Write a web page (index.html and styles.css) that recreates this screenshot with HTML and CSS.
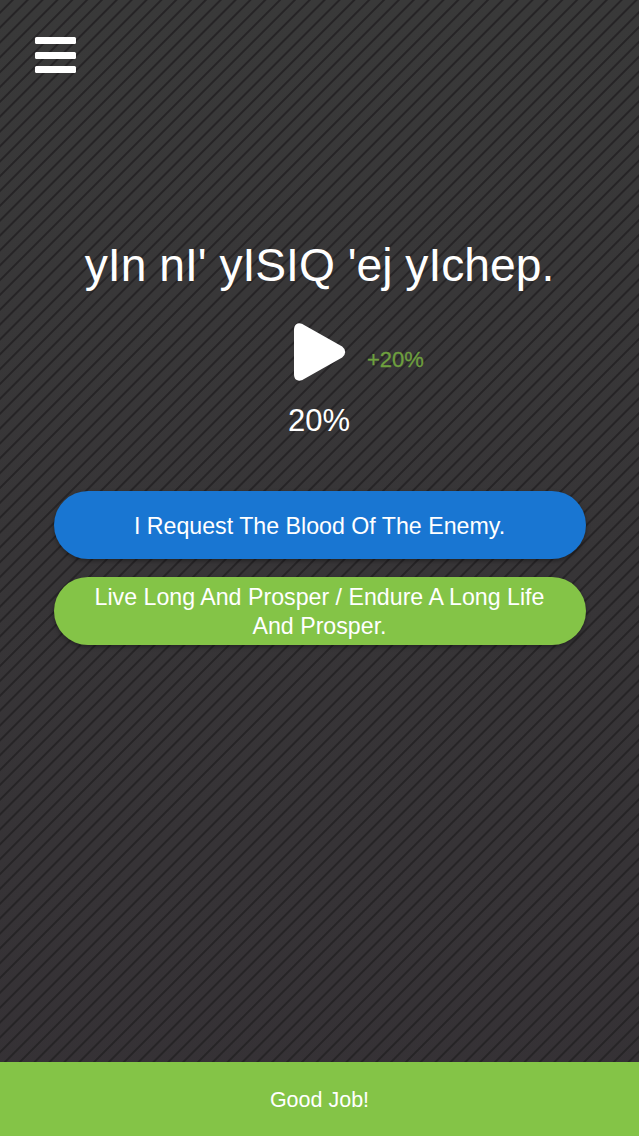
FILE: index.html
```html
<!DOCTYPE html>
<html lang="en">
<head>
    <meta charset="UTF-8">
    <meta name="viewport" content="width=device-width, initial-scale=1.0">
    <title>Lesson</title>
    <link rel="stylesheet" href="styles.css">
</head>
<body>
    <header class="top">
        <button class="menu" aria-label="Menu">
            <span></span>
            <span></span>
            <span></span>
        </button>
    </header>

    <main class="lesson">
        <h1 class="phrase">yIn nI' yISIQ 'ej yIchep.</h1>

        <div class="audio">
            <svg class="play" width="54" height="62" viewBox="0 0 54 62">
                <path d="M9 4.500 L48 26.500 Q53.500 31 48 35.500 L9 57.500 Q2.500 60 2.500 53 V9 Q2.500 2 9 4.500 Z" fill="#fff" stroke="#fff" stroke-width="3" stroke-linejoin="round"/>
            </svg>
            <span class="gain">+20%</span>
        </div>
        <p class="progress">20%</p>

        <div class="answers">
            <button class="answer answer-blue">I Request The Blood Of The Enemy.</button>
            <button class="answer answer-green">Live Long And Prosper / Endure A Long Life And Prosper.</button>
        </div>
    </main>

    <footer class="result">Good Job!</footer>
</body>
</html>
```

FILE: styles.css
```css
body {
    margin: 0;
    height: 1136px;
    display: flex;
    flex-direction: column;
    font-family: "Liberation Sans", Arial, sans-serif;
    color: white;
    background-color: #363436;
    background-image:
        repeating-linear-gradient(135deg, transparent 0, transparent 7.500px, #262426 8.500px, #262426 9.500px, transparent 10.500px),
        linear-gradient(180deg, #393939, #353135);
    overflow: hidden;
}

.top {
    padding: 37px 35px 0;
}

.menu {
    display: flex;
    flex-direction: column;
    gap: 7px;
    width: 41px;
    padding: 0;
    border: none;
    background: none;
}

.menu span {
    height: 7px;
    background: white;
    border-radius: 1.500px;
}

.menu span:nth-child(2) {
    margin-top: 1px;
}

.lesson {
    flex: 1;
    display: flex;
    flex-direction: column;
    align-items: center;
}

.phrase {
    margin: 166px 0 0;
    font-size: 46.200px;
    font-weight: normal;
    line-height: 52px;
}

.audio {
    display: flex;
    align-items: center;
    margin: 30px 0 0 81px;
}

.play {
    display: block;
}

.gain {
    margin: 15px 0 0 20px;
    width: 60px;
    font-size: 22px;
    color: #6ea03e;
    -webkit-text-stroke: 0.3px #6ea03e;
}

.progress {
    margin: 20px 1px 0 0;
    font-size: 31px;
    line-height: 36px;
}

.answers {
    width: 532px;
    margin-top: 52px;
    display: flex;
    flex-direction: column;
    gap: 18.500px;
}

.answer {
    height: 67.500px;
    padding: 3px 30px 0;
    border: none;
    border-radius: 34px;
    font-family: inherit;
    font-size: 23.200px;
    line-height: 29.500px;
    color: white;
    box-shadow: 0 2px 4px rgba(0, 0, 0, 0.35);
}

.answer-blue {
    background: #1976d2;
}

.answer-green {
    background: #84c447;
}

.result {
    height: 72px;
    padding-top: 2px;
    display: flex;
    align-items: center;
    justify-content: center;
    background: #84c447;
    font-size: 21.500px;
}
```
